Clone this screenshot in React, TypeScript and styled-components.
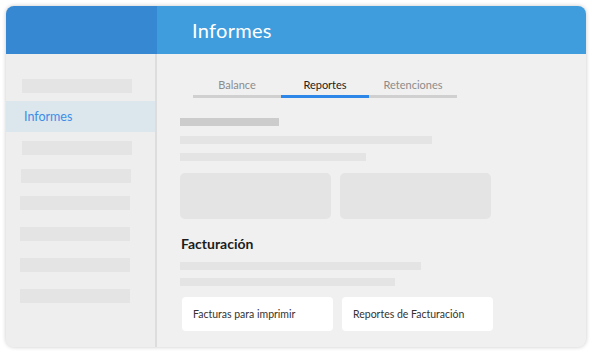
import React from 'react';
import styled, { createGlobalStyle } from 'styled-components';

const GlobalStyle = createGlobalStyle`
  html, body {
    margin: 0;
    padding: 0;
    background: #ffffff;
    font-family: 'Lato', 'Noto Sans', sans-serif;
  }
`;

const Page = styled.div`
  width: 592px;
  height: 352px;
  padding: 6px;
  box-sizing: border-box;
`;

const Window = styled.div`
  display: grid;
  grid-template-columns: 151px 1fr;
  grid-template-rows: 48px 1fr;
  width: 580px;
  height: 341px;
  border-radius: 8px;
  overflow: hidden;
  background: #f0f0f0;
  box-shadow: 0 0 4px rgba(0, 0, 0, 0.22);
`;

const HeaderLeft = styled.div`
  background: #3588d1;
`;

const HeaderRight = styled.div`
  display: flex;
  align-items: center;
  padding-left: 35px;
  background: #3f9ddd;
`;

const Title = styled.h1`
  margin: 0;
  color: #ffffff;
  font-size: 20px;
  font-weight: 400;
  letter-spacing: 0.3px;
`;

const Sidebar = styled.aside`
  display: flex;
  flex-direction: column;
  padding-top: 25px;
  background: #eeeeee;
  border-right: 2px solid #dddddd;
`;

const SideBar = styled.div<{ $mt: number; $ml: number }>`
  width: 110px;
  height: 14px;
  margin-top: ${(p) => p.$mt}px;
  margin-left: ${(p) => p.$ml}px;
  background: #e4e4e4;
`;

const SideItem = styled.div`
  display: flex;
  align-items: center;
  height: 31px;
  margin-top: 8px;
  padding-left: 18px;
  background: #dbe6ed;
  color: #3b8ee8;
  font-size: 12.5px;
`;

const Main = styled.main`
  display: flex;
  flex-direction: column;
  align-items: flex-start;
  padding: 20px 0 0 23px;
`;

const Tabs = styled.div`
  display: flex;
  margin-left: 13px;
`;

const Tab = styled.div<{ $active?: boolean }>`
  display: flex;
  align-items: flex-end;
  justify-content: center;
  width: 88px;
  height: 24px;
  padding-bottom: 4px;
  box-sizing: border-box;
  border-bottom: 3px solid ${(p) => (p.$active ? '#2c87e8' : '#d0d0d0')};
  color: ${(p) => (p.$active ? '#222222' : '#8c8c8c')};
  font-size: 11px;
`;

const Line = styled.div<{ $w: number; $mt: number; $dark?: boolean }>`
  width: ${(p) => p.$w}px;
  height: 8px;
  margin-top: ${(p) => p.$mt}px;
  background: ${(p) => (p.$dark ? '#cccccc' : '#e4e4e4')};
`;

const CardRow = styled.div<{ $mt: number; $ml?: number }>`
  display: flex;
  gap: 9px;
  margin-top: ${(p) => p.$mt}px;
  margin-left: ${(p) => p.$ml ?? 0}px;
`;

const Placeholder = styled.div`
  width: 151px;
  height: 46px;
  border-radius: 5px;
  background: #e4e4e4;
`;

const Heading = styled.h2`
  margin: 16px 0 0 1px;
  color: #1c1c1c;
  font-size: 14px;
  font-weight: 700;
  line-height: 18px;
`;

const LinkCard = styled.div`
  display: flex;
  align-items: center;
  width: 151px;
  height: 34px;
  padding-left: 11px;
  box-sizing: border-box;
  border-radius: 4px;
  background: #ffffff;
  color: #333333;
  font-size: 10.5px;
`;

const sideBars = [
  { mt: 9, ml: 16 },
  { mt: 14, ml: 15 },
  { mt: 13, ml: 14 },
  { mt: 17, ml: 14 },
  { mt: 17, ml: 14 },
  { mt: 17, ml: 14 },
];

export default function App() {
  return (
    <Page>
      <GlobalStyle />
      <Window>
        <HeaderLeft />
        <HeaderRight>
          <Title>Informes</Title>
        </HeaderRight>
        <Sidebar>
          <SideBar $mt={0} $ml={16} />
          <SideItem>Informes</SideItem>
          {sideBars.map((b, i) => (
            <SideBar key={i} $mt={b.mt} $ml={b.ml} />
          ))}
        </Sidebar>
        <Main>
          <Tabs>
            <Tab>Balance</Tab>
            <Tab $active>Reportes</Tab>
            <Tab>Retenciones</Tab>
          </Tabs>
          <Line $w={99} $mt={20} $dark />
          <Line $w={252} $mt={10} />
          <Line $w={186} $mt={9} />
          <CardRow $mt={12}>
            <Placeholder />
            <Placeholder />
          </CardRow>
          <Heading>Facturación</Heading>
          <Line $w={241} $mt={9} />
          <Line $w={215} $mt={8} />
          <CardRow $mt={11} $ml={2}>
            <LinkCard>Facturas para imprimir</LinkCard>
            <LinkCard>Reportes de Facturación</LinkCard>
          </CardRow>
        </Main>
      </Window>
    </Page>
  );
}
